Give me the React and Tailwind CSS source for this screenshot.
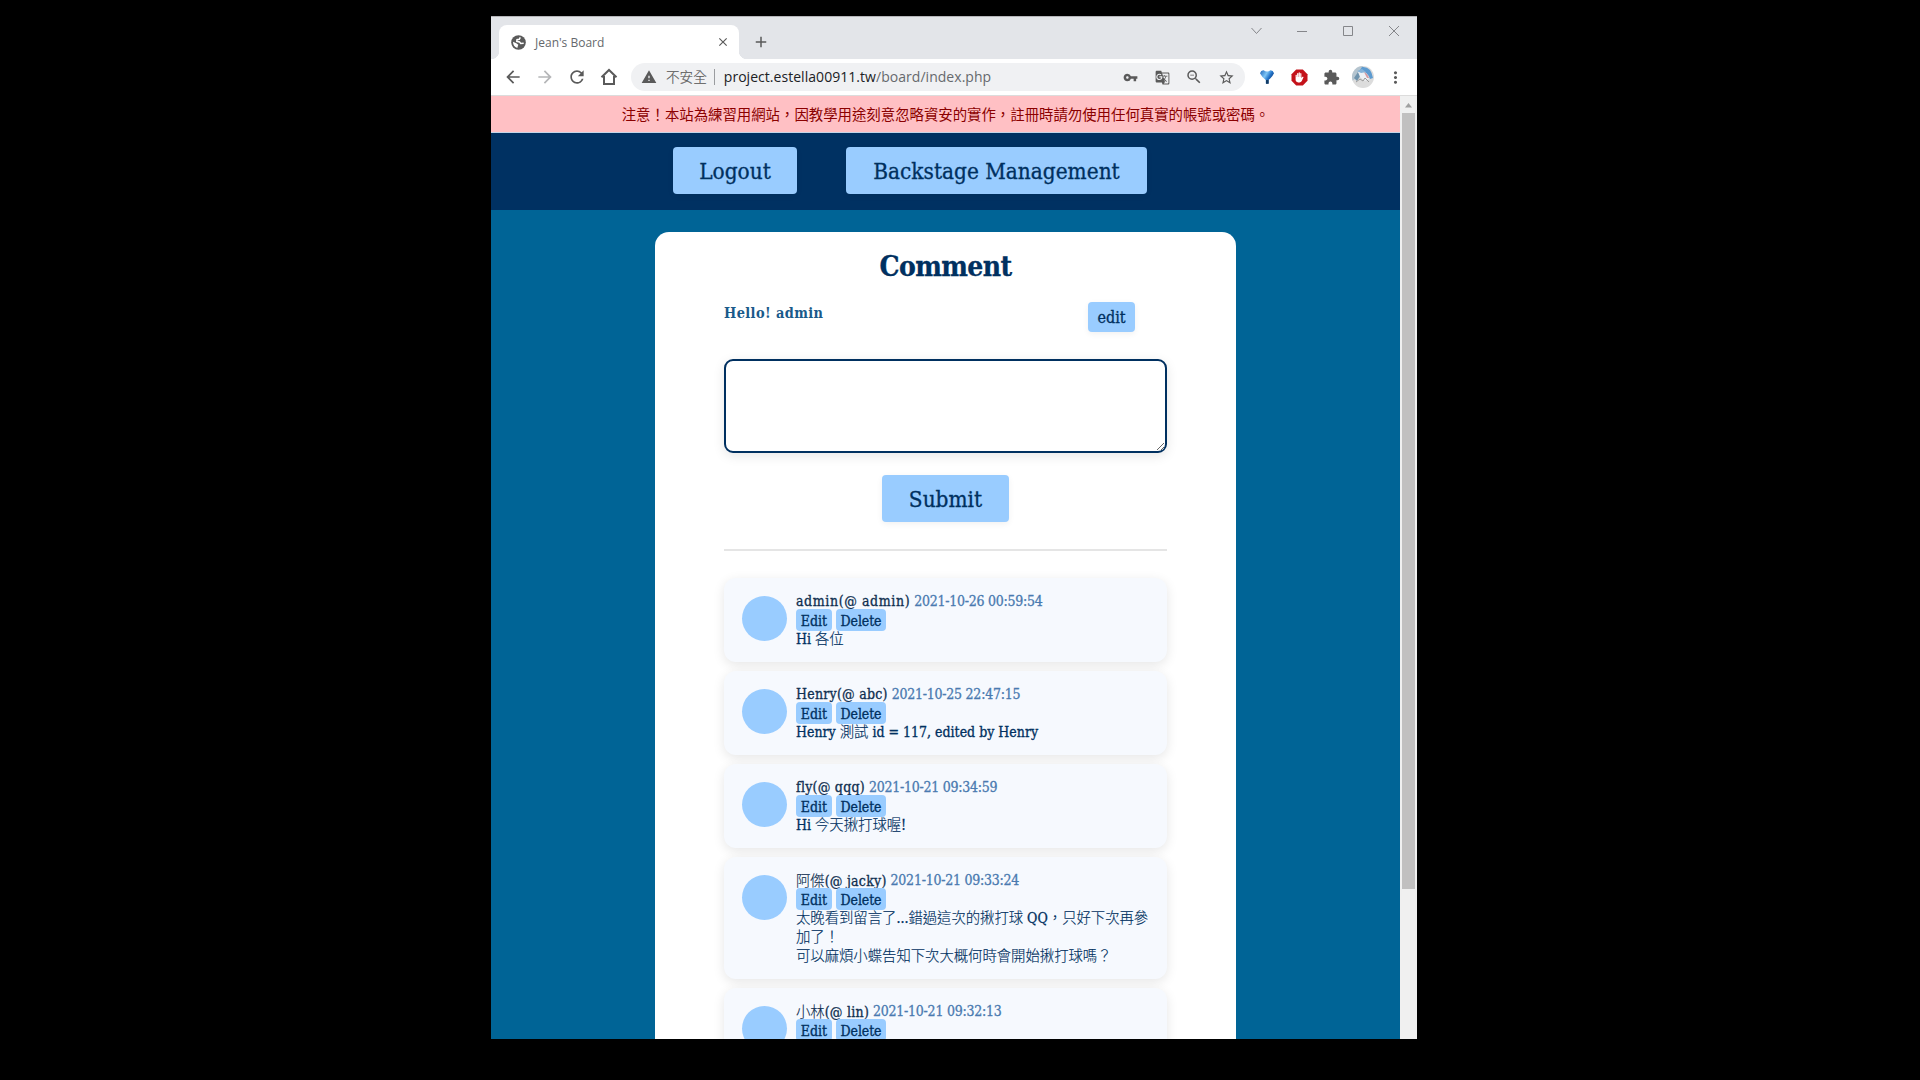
import {
  MdArrowBack,
  MdArrowForward,
  MdRefresh,
  MdWarning,
  MdVpnKey,
  MdGTranslate,
  MdZoomOut,
  MdStarBorder,
  MdExtension,
  MdMoreVert,
  MdClose,
  MdAdd,
} from "react-icons/md";

const slab = "font-['DejaVu_Serif_Condensed','Noto_Sans_CJK_TC',serif]";
const ui = "font-['Open_Sans','Noto_Sans_CJK_TC',sans-serif]";

const comments = [
  { name: "admin", user: "admin", time: "2021-10-26 00:59:54", lines: [[["Hi "], ["各位", 1]]] },
  {
    name: "Henry",
    user: "abc",
    time: "2021-10-25 22:47:15",
    lines: [[["Henry "], ["測試", 1], [" id = 117, edited by Henry"]]],
  },
  { name: "fly", user: "qqq", time: "2021-10-21 09:34:59", lines: [[["Hi "], ["今天揪打球喔", 1], ["!"]]] },
  {
    name: "阿傑",
    cjk: true,
    user: "jacky",
    time: "2021-10-21 09:33:24",
    lines: [
      [["太晚看到留言了", 1], ["..."], ["錯過這次的揪打球", 1], [" QQ"], ["，只好下次再參", 1]],
      [["加了！", 1]],
      [["可以麻煩小蝶告知下次大概何時會開始揪打球嗎？", 1]],
    ],
  },
  { name: "小林", cjk: true, user: "lin", time: "2021-10-21 09:32:13", lines: [] },
];

function Cjk({ children }) {
  return (
    <span className="font-['Noto_Sans_CJK_TC',sans-serif] text-[14.4px] font-light tracking-[-0.05px] [-webkit-text-stroke:0.15px]">
      {children}
    </span>
  );
}

function Globe() {
  return (
    <svg width="15" height="15" viewBox="0 0 15 15">
      <circle cx="7.500" cy="7.500" r="7.300" fill="#5a5a5a" />
      <path
        d="M9.300 2.300 8.300 4.300 6 4.600 5.800 6.300 8.500 6.900 9.700 8.500 12.700 8.300"
        fill="none"
        stroke="#fff"
        strokeWidth="1.500"
      />
      <path d="M2 6.800 5.300 8.300 7.300 9.800 6.800 11.300 6.300 12.900Q2 11.500 2 6.800z" fill="#fff" />
    </svg>
  );
}

function HomeIcon() {
  return (
    <svg width="18" height="18" viewBox="0 0 18 18" fill="none" stroke="#5a5a5a" strokeWidth="2">
      <path d="M1.500 9.300 9 2l7.500 7.300M4 8v8h10V8" />
    </svg>
  );
}

function Balloon() {
  return (
    <svg width="16" height="16" viewBox="0 0 16 16">
      <defs>
        <linearGradient id="bl" x1="0" x2="1" y1="0" y2="0.6">
          <stop offset="0" stopColor="#1e63b8" />
          <stop offset="0.45" stopColor="#7cc4f5" />
          <stop offset="0.7" stopColor="#2272c8" />
          <stop offset="1" stopColor="#0b3470" />
        </linearGradient>
      </defs>
      <path
        d="M1 4.200Q2 1 4.600 1.200 6.500 2.500 8 2.400 9.500 2.500 11.400 1.200 14 1 15 4.200 13.500 7.600 9.600 11V14.600H6.800V11Q2.500 7.600 1 4.200Z"
        fill="url(#bl)"
      />
      <path d="M7 11h2.600v3.800H7z" fill="#123c66" />
    </svg>
  );
}

function BlockHand() {
  return (
    <svg width="17" height="17" viewBox="0 0 17 17">
      <path d="M5.200.5h6.600l4.700 4.700v6.600l-4.700 4.700H5.200L.5 11.800V5.200z" fill="#c4121a" />
      <path
        d="M4.600 6.100q.6-.6 1.200 0V8h.3V4.400q.6-.7 1.200 0V8h.3V3.700q.6-.7 1.300 0V8h.3V4.400q.6-.7 1.200 0v4.700l1.100-1.300q.8-.4 1.100.3L10.800 12q-.7 1.400-2.400 1.400H7.200Q4.600 13.200 4.600 10.600z"
        fill="#fff"
      />
    </svg>
  );
}

function Avatar() {
  return (
    <svg width="22" height="22" viewBox="0 0 22 22">
      <defs>
        <clipPath id="av">
          <circle cx="11" cy="11" r="11" />
        </clipPath>
      </defs>
      <g clipPath="url(#av)">
        <rect width="22" height="22" fill="#dcdcdc" />
        <path d="M0 0h11L9 5 3 13 0 15z" fill="#b4c4cf" />
        <path d="M10 1q9-1 11 11l-3 1Q16 6 8 4z" fill="#5d9bd0" />
        <path d="M2 12 6 6l3 3-4 6z" fill="#6f93ad" />
        <path d="M6 6q7-2 11 7l-4 2-5-4z" fill="#eef1f5" />
        <path d="M12 6q3 1 5 6l-2 0z" fill="#d59aa2" />
        <path d="M5 5 10 3l4 3-5 1z" fill="#86b3d8" />
        <path d="M4 16l4-3 3 2 2-3 4 4" fill="none" stroke="#9a9a9a" />
      </g>
    </svg>
  );
}

function TitleBar() {
  return (
    <div className="flex h-[43px] items-end border-t border-[#b5b5b8] bg-[#e3e5e9] pl-2">
      <div className="relative flex h-[34px] w-[240px] items-center rounded-t-lg bg-white pr-[9px] pl-[12px]">
        <Globe />
        <span className={`ml-[9px] flex-1 pt-[2px] text-[12px] text-[#65686c] ${ui}`}>Jean's Board</span>
        <MdClose size={14} className="text-[#5a5a5a]" />
        <i className="absolute bottom-0 -left-2 size-2 bg-[radial-gradient(circle_at_0_0,#e3e5e9_8px,#fff_8.5px)]" />
        <i className="absolute -right-2 bottom-0 size-2 bg-[radial-gradient(circle_at_100%_0,#e3e5e9_8px,#fff_8.5px)]" />
      </div>
      <div className="flex h-[34px] w-11 items-center justify-center">
        <MdAdd size={18} className="text-[#5a5a5a]" />
      </div>
      <div className="flex h-[42px] flex-1 justify-end pt-2">
        <svg width="150" height="12" viewBox="0 0 150 12" fill="none" stroke="#85868a" className="mr-[17px]">
          <path d="M1.500 3 6.500 8.500 11.500 3" />
          <path d="M47 6.500h10" />
          <path d="M93.500 1.500h9v9h-9z" />
          <path d="M139 1l10 10M149 1l-10 10" />
        </svg>
      </div>
    </div>
  );
}

function Toolbar() {
  return (
    <div className="flex h-[37px] items-center border-b border-[#dcdcdc] bg-white text-[#5a5a5a]">
      <div className="flex w-[140px] items-center pl-[12px]">
        <MdArrowBack size={20} />
        <MdArrowForward size={20} className="ml-3 text-[#b5b6b8]" />
        <MdRefresh size={20} className="mr-[13px] ml-3" />
        <HomeIcon />
      </div>
      <div className="flex h-7 w-[614px] items-center rounded-full bg-[#f0f1f3]">
        <MdWarning size={16} className="ml-[10px]" />
        <span className={`ml-[9px] text-[13.6px] font-light [-webkit-text-stroke:0.2px] ${ui}`}>不安全</span>
        <span className="ml-[7px] h-4 w-px bg-[#9a9c9f]" />
        <span className={`ml-[9px] flex-1 text-[14px] leading-none tracking-[0.04px] text-[#66696d] ${ui}`}>
          <span className="text-[#202124]">project.estella00911.tw</span>/board/index.php
        </span>
        <div className="grid w-32 grid-cols-4 place-items-center">
          <MdVpnKey size={15} />
          <MdGTranslate size={15} />
          <MdZoomOut size={18} />
          <MdStarBorder size={17} />
        </div>
        <span className="w-[3px]" />
      </div>
      <div className="ml-[6px] grid w-40 grid-cols-5 place-items-center">
        <Balloon />
        <BlockHand />
        <MdExtension size={17} />
        <Avatar />
        <MdMoreVert size={19} />
      </div>
    </div>
  );
}

function BigButton({ className, children }) {
  return (
    <button
      className={`flex h-[47px] items-center justify-center rounded-[4px] bg-[#99ccff] pt-[3px] text-[22.4px] text-[#003060] shadow-[0_2px_6px_rgba(0,0,0,0.06)] ${className}`}
    >
      {children}
    </button>
  );
}

function Comment({ c }) {
  return (
    <li className="flex rounded-[12px] bg-[#f6f9fe] pt-[18px] pr-4 pb-[15px] pl-[18px] shadow-[0_3px_12px_rgba(0,0,0,0.1)]">
      <div className="size-[45px] shrink-0 rounded-full bg-[#99ccff]" />
      <div className="-mt-[4px] ml-[9px] text-[14px] leading-[19px] whitespace-nowrap text-[#003060]">
        <div className="flex h-[17px] items-center pt-px">
          <span className={c.name === "admin" ? "tracking-[0.6px] text-[#0f2f50]" : "tracking-[0.25px] text-[#0f2f50]"}>
            {c.cjk ? <Cjk>{c.name}</Cjk> : c.name}(@ {c.user})
          </span>
          <span className="ml-[4px] tracking-[-0.25px] text-[#4a7ab0]">{c.time}</span>
        </div>
        <div className="flex h-[22px] gap-1">
          <button className="flex w-9 items-center justify-center rounded-[4px] bg-[#99ccff] pt-[2px]">Edit</button>
          <button className="flex w-[50px] items-center justify-center rounded-[4px] bg-[#99ccff] pt-[2px] tracking-[-0.1px]">
            Delete
          </button>
        </div>
        <div className="-mt-[3px]">
          {(c.lines.length ? c.lines : [[[" "]]]).map((line, i) => (
            <div key={i} className="h-[19px] whitespace-pre">
              {line.map(([t, cjk], j) => (cjk ? <Cjk key={j}>{t}</Cjk> : <span key={j}>{t}</span>))}
            </div>
          ))}
        </div>
      </div>
    </li>
  );
}

export default function App() {
  return (
    <div className="h-[1080px] w-[1920px] overflow-hidden bg-black pt-4 pl-[491px]">
      <div className="flex h-[1023px] w-[926px] flex-col overflow-hidden">
        <TitleBar />
        <Toolbar />
        <div className="flex min-h-0 flex-1">
          <div className={`w-[909px] overflow-hidden bg-[#006496] [-webkit-text-stroke:0.3px] ${slab}`}>
            <div className="flex h-[37px] items-center justify-center border-b border-[#c5d5e8] bg-[#ffc0c4] font-['Noto_Sans_CJK_TC',sans-serif] text-[14.4px] text-[#8b0000] [-webkit-text-stroke:0px]">
              注意！本站為練習用網站，因教學用途刻意忽略資安的實作，註冊時請勿使用任何真實的帳號或密碼。
            </div>
            <nav className="flex h-[77px] gap-[49px] bg-[#003162] pt-[14px] pl-[182px]">
              <BigButton className="w-[124px]">Logout</BigButton>
              <BigButton className="w-[301px]">Backstage Management</BigButton>
            </nav>
            <main className="mx-auto mt-[22px] h-[900px] w-[581px] rounded-t-[14px] bg-white px-[69px] pt-[17px]">
              <h1 className="text-center text-[28px] leading-9 font-bold tracking-[-0.6px] text-[#003060]">Comment</h1>
              <div className="mt-[17px] flex h-[30px] justify-between pr-8">
                <span className="pt-px text-[14.4px] leading-[19px] font-bold tracking-[0.4px] text-[#1a5a8a] [-webkit-text-stroke:0px]">
                  Hello! admin
                </span>
                <button className="flex w-[47px] items-center justify-center rounded-[4px] bg-[#99ccff] pt-px text-[16px] text-[#003060] shadow-[0_2px_6px_rgba(0,0,0,0.06)]">
                  edit
                </button>
              </div>
              <textarea className="mt-[27px] block h-[94px] w-[443px] resize rounded-[9px] border-2 border-[#003060] bg-white shadow-[0_3px_12px_rgba(0,0,0,0.1)] outline-none" />
              <BigButton className="mx-auto mt-[22px] w-[127px]">Submit</BigButton>
              <hr className="mt-[27px] border-t-2 border-[#e5e5e5]" />
              <ul className="mt-[27px] flex flex-col gap-[9px]">
                {comments.map((c) => (
                  <Comment key={c.time} c={c} />
                ))}
              </ul>
            </main>
          </div>
          <div className="flex w-[17px] flex-col items-center bg-[#f0f0f0]">
            <svg width="17" height="17" viewBox="0 0 17 17" fill="#a0a0a0">
              <path d="M5 11.500h7L8.500 7z" />
            </svg>
            <div className="h-[776px] w-[13px] bg-[#c1c0c0]" />
          </div>
        </div>
      </div>
    </div>
  );
}
